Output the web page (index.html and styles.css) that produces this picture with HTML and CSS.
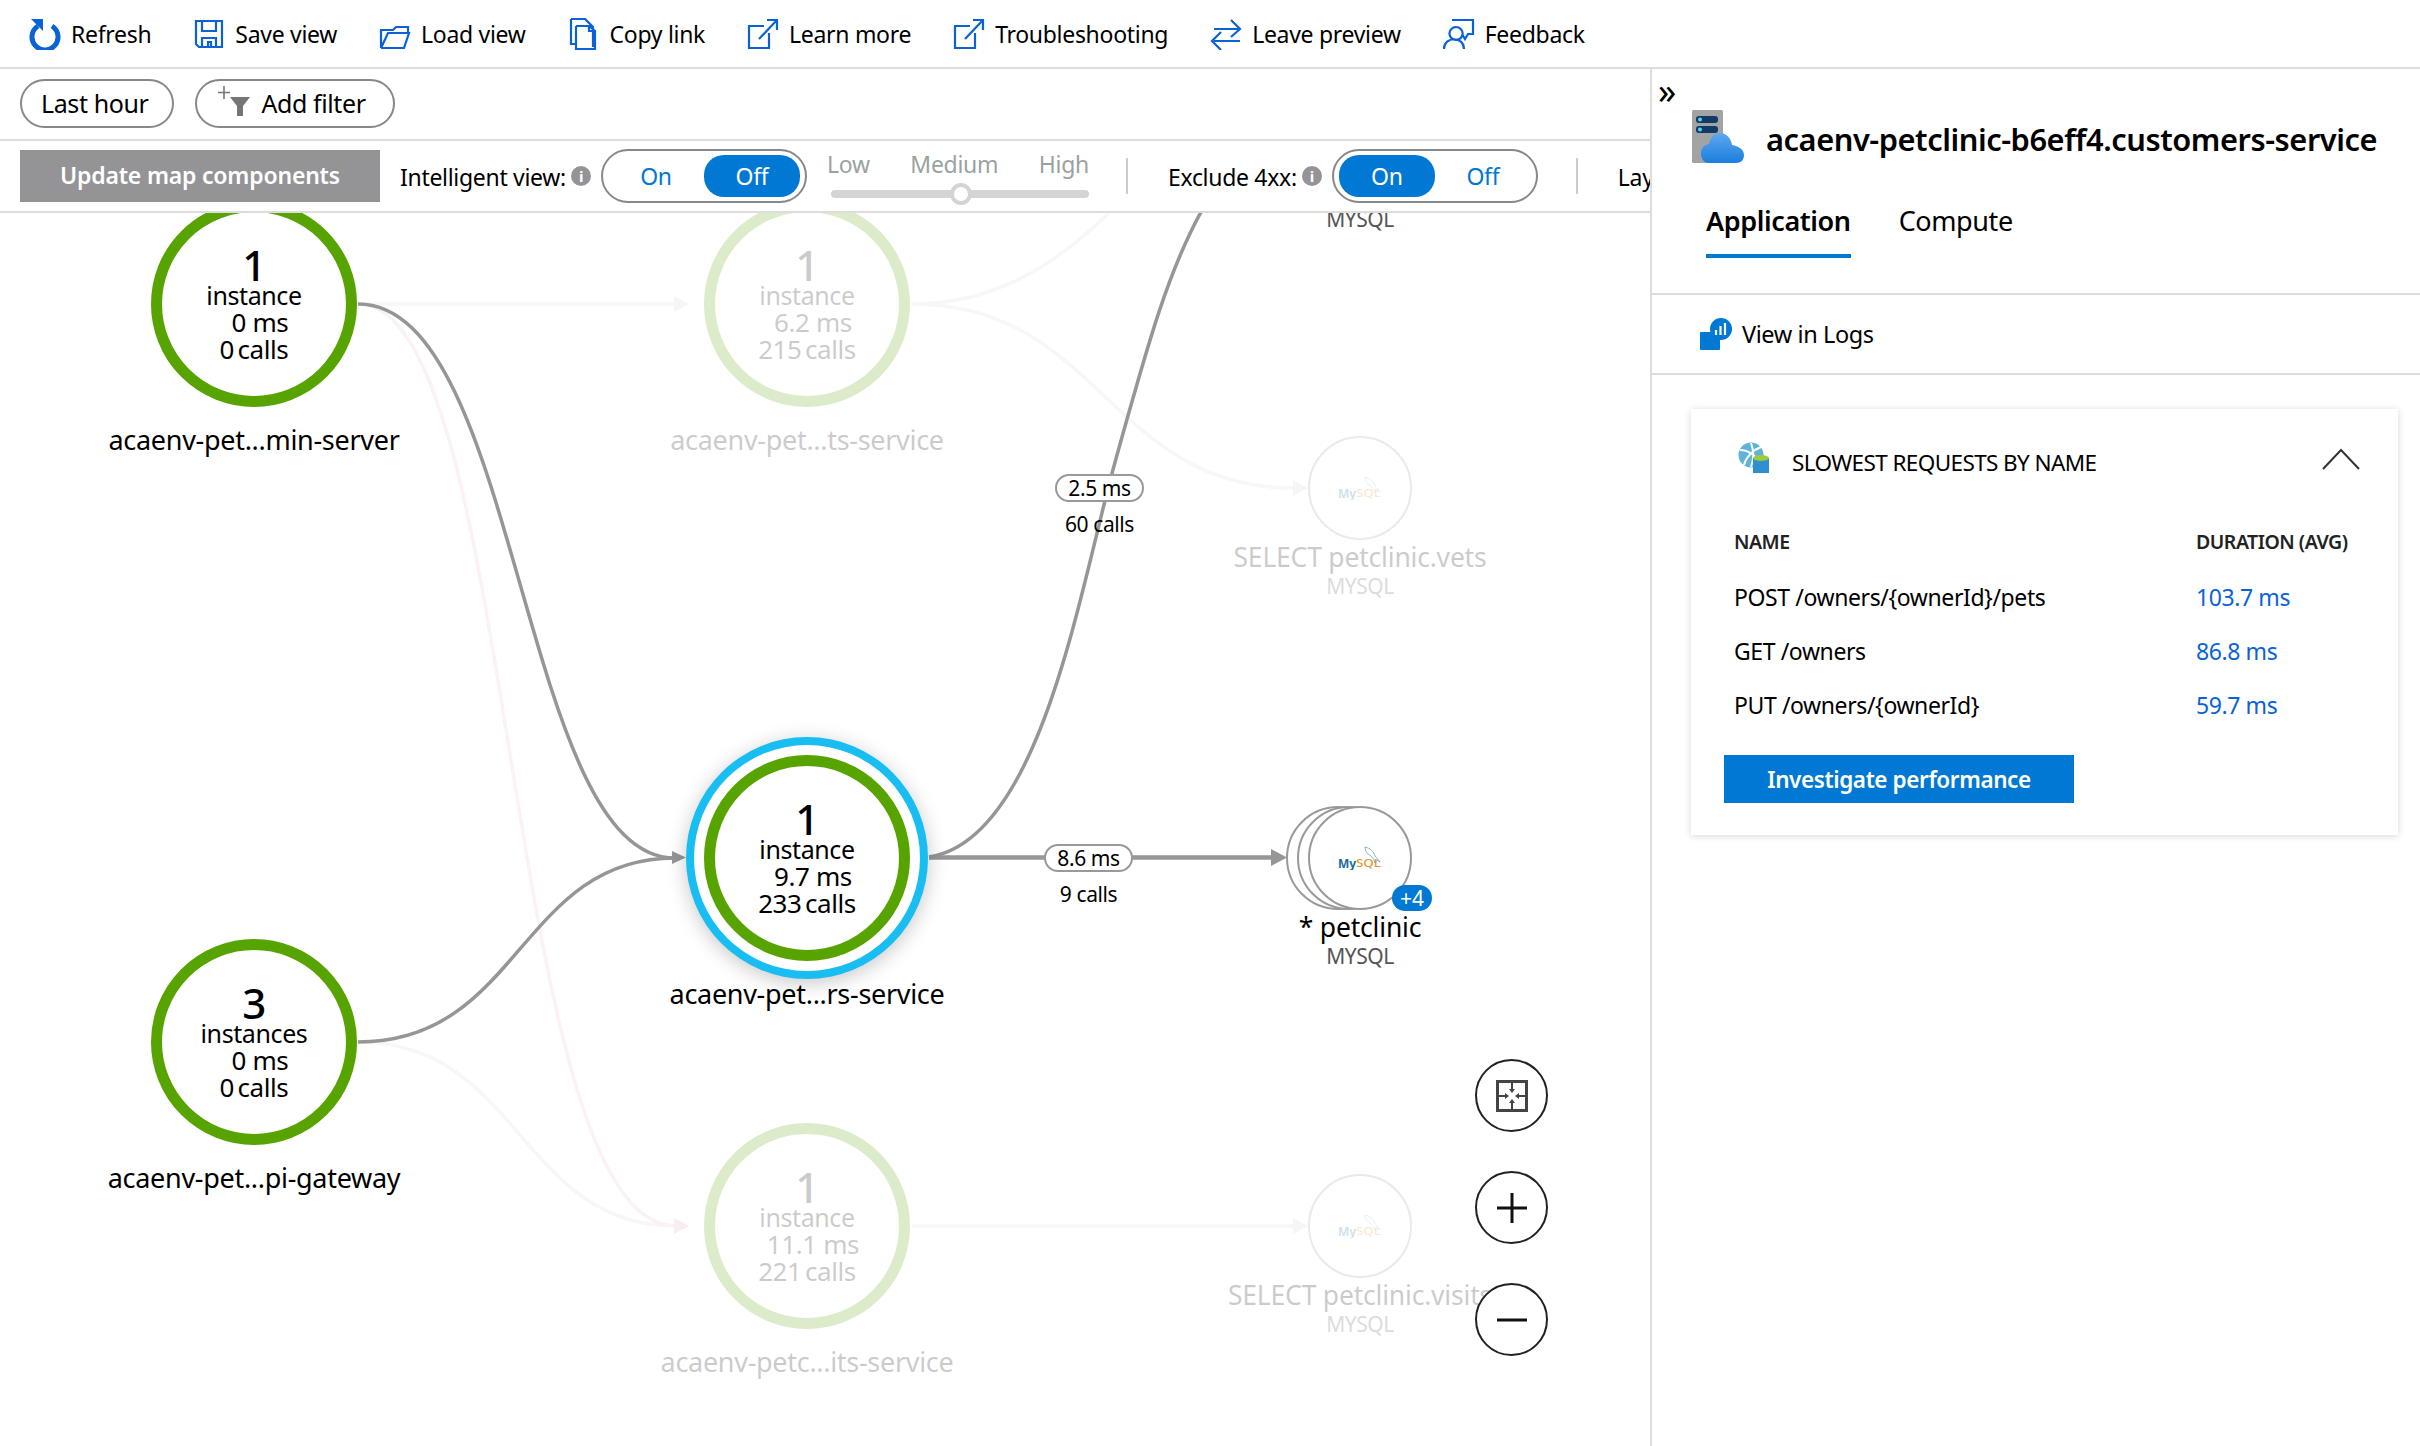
FILE: index.html
```html
<!DOCTYPE html>
<html lang="en">
<head>
  <meta charset="UTF-8">
  <title>Application Map</title>
  <link rel="stylesheet" href="styles.css">
</head>
<body>
  <div class="toolbar">
    <div class="tool">
      <svg class="tool-icon" viewBox="0 0 32 32"><path d="M9 8a13 13 0 1 0 14 0" fill="none" stroke="#0b62d6" stroke-width="5"/><path d="M2 1h12v12z" fill="#0b62d6"/></svg>
      <span>Refresh</span>
    </div>
    <div class="tool">
      <svg class="tool-icon" viewBox="0 0 32 32"><path d="M3 3h26v26H6l-3-3zM9 3v10h14V3M9 29v-9h14v9M15 29v-5h3v5" fill="none" stroke="#0b62d6" stroke-width="2.2"/></svg>
      <span>Save view</span>
    </div>
    <div class="tool">
      <svg class="tool-icon" viewBox="0 0 32 32"><path d="M2 30V12h12l3-3h12v5M2 30h23l5-15H9L2 30" fill="none" stroke="#0b62d6" stroke-width="2.2"/></svg>
      <span>Load view</span>
    </div>
    <div class="tool">
      <svg class="tool-icon" viewBox="0 0 32 32"><path d="M3 1h14l8 8v20M3 1v25h5M8 8v23h19V13l-6-5H8M21 8v5h6" fill="none" stroke="#0b62d6" stroke-width="2.2"/></svg>
      <span>Copy link</span>
    </div>
    <div class="tool">
      <svg class="tool-icon" viewBox="0 0 32 32"><path d="M17 8H2v22h20V15M12 21L30 2M20 2h10v10" fill="none" stroke="#0b62d6" stroke-width="2.2"/></svg>
      <span>Learn more</span>
    </div>
    <div class="tool">
      <svg class="tool-icon" viewBox="0 0 32 32"><path d="M17 8H2v22h20V15M12 21L30 2M20 2h10v10" fill="none" stroke="#0b62d6" stroke-width="2.2"/></svg>
      <span>Troubleshooting</span>
    </div>
    <div class="tool">
      <svg class="tool-icon" viewBox="0 0 32 32"><path d="M4 11h25M21 2l9 9-9 8M30 23H4M11 14l-9 9 9 9" fill="none" stroke="#0b62d6" stroke-width="2.2"/></svg>
      <span>Leave preview</span>
    </div>
    <div class="tool">
      <svg class="tool-icon" viewBox="0 0 32 32"><path d="M9 2h21v14h-5l-3 5-3-5M13 9a6.500 6.500 0 1 0 .1 0M1 31c0-13 20-13 20 0" fill="none" stroke="#0b62d6" stroke-width="2.2"/></svg>
      <span>Feedback</span>
    </div>
  </div>

  <div class="main">
    <div class="map-area">
      <div class="filters">
        <div class="pill">Last hour</div>
        <div class="pill pill-filter">
          <svg class="filter-icon" viewBox="0 0 32 30"><path d="M6 0v13M0 6.500h12" stroke="#777" stroke-width="1.600"/><path d="M12 11h20l-7 9v10h-6V20z" fill="#757575"/></svg>
          Add filter
        </div>
      </div>

      <div class="controls">
        <div class="update-btn">Update map components</div>
        <span class="ctl-label">Intelligent view:</span>
        <span class="info">i</span>
        <div class="toggle">
          <span class="seg">On</span>
          <span class="seg seg-on">Off</span>
        </div>
        <div class="level">
          <div class="level-names"><span>Low</span><span>Medium</span><span>High</span></div>
          <div class="level-track"><span class="level-thumb"></span></div>
        </div>
        <span class="ctl-sep"></span>
        <span class="ctl-label">Exclude 4xx:</span>
        <span class="info">i</span>
        <div class="toggle">
          <span class="seg seg-on">On</span>
          <span class="seg">Off</span>
        </div>
        <span class="ctl-sep"></span>
        <span class="ctl-label">Layout</span>
      </div>

      <div class="canvas">
        <svg class="edges" width="1650" height="1233" viewBox="0 213 1650 1233">
          <!-- faded edges first, they sit under the live ones -->
          <g class="edge-faint">
            <path d="M358 304H676"/>
            <path d="M912 304C1000 304 1060 260 1109 213"/>
            <path d="M912 304C1100 304 1110 488 1293 488"/>
            <path d="M358 1042C520 1042 520 1226 676 1226"/>
            <path d="M912 1226H1296"/>
            <polygon points="674,296 689,304 674,312"/>
            <polygon points="1293,480 1308,488 1293,496"/>
            <polygon points="1293,1218 1308,1226 1293,1234"/>
          </g>
          <g class="edge-pink">
            <path d="M358 304C520 304 500 1226 676 1226"/>
            <polygon points="674,1218 689,1226 674,1234"/>
          </g>
          <g class="edge-live">
            <path d="M358 304C520 304 520 858 675 858"/>
            <path d="M358 1042C520 1042 520 858 675 858"/>
            <path d="M929 857C1040 840 1079 593 1114 466S1170 265 1205 205"/>
            <path class="edge-thick" d="M929 857.500H1275"/>
            <polygon points="672,851 686,857.500 672,864"/>
            <polygon points="1271,849 1287,857.500 1271,866"/>
          </g>
        </svg>

        <div class="node node-admin">
          <div class="ring">
            <span class="count">1</span>
            <span>instance</span>
            <span class="ms">0 ms</span>
            <span class="calls">0 calls</span>
          </div>
          <div class="node-label">acaenv-pet...min-server</div>
        </div>
        <div class="node node-pets faded">
          <div class="ring">
            <span class="count">1</span>
            <span>instance</span>
            <span class="ms">6.2 ms</span>
            <span class="calls">215 calls</span>
          </div>
          <div class="node-label">acaenv-pet...ts-service</div>
        </div>
        <div class="node node-customers">
          <div class="ring ring-selected">
            <span class="count">1</span>
            <span>instance</span>
            <span class="ms">9.7 ms</span>
            <span class="calls">233 calls</span>
          </div>
          <div class="node-label">acaenv-pet...rs-service</div>
        </div>
        <div class="node node-gateway">
          <div class="ring">
            <span class="count">3</span>
            <span>instances</span>
            <span class="ms">0 ms</span>
            <span class="calls">0 calls</span>
          </div>
          <div class="node-label">acaenv-pet...pi-gateway</div>
        </div>
        <div class="node node-visits faded">
          <div class="ring">
            <span class="count">1</span>
            <span>instance</span>
            <span class="ms">11.1 ms</span>
            <span class="calls">221 calls</span>
          </div>
          <div class="node-label">acaenv-petc...its-service</div>
        </div>

        <div class="db db-top"><div class="db-type">MYSQL</div></div>
        <div class="db db-vets faded">
          <div class="db-circle">
            <svg class="db-logo" viewBox="0 0 44 24">
              <path class="logo-fish" d="M27 1c5 1 9 5 10 9l5 6-3-2-2 3c-1-5-4-7-7-9-2-2-3-4-3-7z"/>
              <text class="logo-my" x="0" y="22">My</text><text class="logo-sql" x="18" y="21" textLength="25" lengthAdjust="spacingAndGlyphs">SQL</text>
            </svg>
          </div>
          <div class="db-name">SELECT petclinic.vets</div>
          <div class="db-type">MYSQL</div>
        </div>
        <div class="db db-petclinic">
          <div class="db-circle db-stack">
            <span class="db-back db-back-1"></span>
            <span class="db-back db-back-2"></span>
            <svg class="db-logo" viewBox="0 0 44 24">
              <path class="logo-fish" d="M27 1c5 1 9 5 10 9l5 6-3-2-2 3c-1-5-4-7-7-9-2-2-3-4-3-7z"/>
              <text class="logo-my" x="0" y="22">My</text><text class="logo-sql" x="18" y="21" textLength="25" lengthAdjust="spacingAndGlyphs">SQL</text>
            </svg>
            <span class="db-badge">+4</span>
          </div>
          <div class="db-name">* petclinic</div>
          <div class="db-type">MYSQL</div>
        </div>
        <div class="db db-visits faded">
          <div class="db-circle">
            <svg class="db-logo" viewBox="0 0 44 24">
              <path class="logo-fish" d="M27 1c5 1 9 5 10 9l5 6-3-2-2 3c-1-5-4-7-7-9-2-2-3-4-3-7z"/>
              <text class="logo-my" x="0" y="22">My</text><text class="logo-sql" x="18" y="21" textLength="25" lengthAdjust="spacingAndGlyphs">SQL</text>
            </svg>
          </div>
          <div class="db-name">SELECT petclinic.visits</div>
          <div class="db-type">MYSQL</div>
        </div>

        <div class="edge-label edge-label-vets">
          <span class="edge-pill">2.5 ms</span>
          <span>60 calls</span>
        </div>
        <div class="edge-label edge-label-db">
          <span class="edge-pill">8.6 ms</span>
          <span>9 calls</span>
        </div>

        <div class="zoom-controls">
          <div class="zoom-btn">
            <svg viewBox="0 0 36 36" width="36" height="36"><path d="M3.500 3.500h29v29h-29z" fill="none" stroke="#444" stroke-width="3"/><path d="M18 4v9M18 32v-9M4 18h9M32 18h-9" stroke="#444" stroke-width="2"/><path d="M15 11h6l-3 4zM15 25h6l-3-4zM11 15v6l4-3zM25 15v6l-4-3z" fill="#444"/></svg>
          </div>
          <div class="zoom-btn">
            <svg viewBox="0 0 36 36" width="36" height="36"><path d="M3 18h30M18 3v30" stroke="#111" stroke-width="3"/></svg>
          </div>
          <div class="zoom-btn">
            <svg viewBox="0 0 36 36" width="36" height="36"><path d="M3 18h30" stroke="#111" stroke-width="3"/></svg>
          </div>
        </div>
      </div>
    </div>

    <div class="side-panel">
      <div class="collapse">»</div>
      <div class="panel-head">
        <svg class="panel-icon" viewBox="0 0 52 53">
          <defs><linearGradient id="cloud" x1="0" y1="0" x2="0" y2="1"><stop offset="0" stop-color="#5ea7f0"/><stop offset="1" stop-color="#1b7fdc"/></linearGradient></defs>
          <rect x="0" y="0" width="31" height="53" rx="1.500" fill="#a2a3a5"/>
          <rect x="4" y="6" width="22" height="7" rx="3" fill="#123a66"/>
          <rect x="4" y="16" width="22" height="7" rx="3" fill="#123a66"/>
          <circle cx="8" cy="9.500" r="2" fill="#4fd4f2"/>
          <circle cx="8" cy="19.500" r="2" fill="#4fd4f2"/>
          <path d="M18 53c-7 0-9-5-9-10 0-5 3-8 8-9 1-6 5-11 11-11 7 0 11 6 12 12 6 1 12 4 12 10 0 5-3 8-8 8z" fill="url(#cloud)"/>
        </svg>
        <div class="panel-title">acaenv-petclinic-b6eff4.customers-service</div>
      </div>
      <div class="tabs">
        <div class="tab tab-active">Application</div>
        <div class="tab">Compute</div>
      </div>
      <div class="logs-row">
        <svg class="logs-icon" viewBox="0 0 32 32">
          <rect x="0" y="14" width="20" height="18" rx="1" fill="#0078d4"/>
          <circle cx="21" cy="11" r="11" fill="#0078d4"/>
          <path d="M16 12v5M20.500 8v9M25 5v12" stroke="#fff" stroke-width="2.200"/>
        </svg>
        <span>View in Logs</span>
      </div>
      <div class="card">
        <div class="card-head">
          <svg class="card-icon" viewBox="0 0 32 32">
            <circle cx="13" cy="13" r="12.500" fill="#5fb4d6"/>
            <path d="M2 8c8 0 16 5 20 14M23 5C15 8 8 15 6 23M13 1c3 8 3 16 0 24" fill="none" stroke="#fff" stroke-width="2"/>
            <path d="M15 16h16v15H15z" fill="#2f8fcf"/>
            <ellipse cx="23" cy="16" rx="8" ry="3" fill="#9ccb3b"/>
          </svg>
          <span class="card-title">SLOWEST REQUESTS BY NAME</span>
          <svg class="chevron" viewBox="0 0 38 22"><path d="M1 21L19 2l18 19" fill="none" stroke="#333" stroke-width="2"/></svg>
        </div>
        <table class="requests">
          <thead>
            <tr><th>NAME</th><th>DURATION (AVG)</th></tr>
          </thead>
          <tbody>
            <tr><td>POST /owners/{ownerId}/pets</td><td class="duration">103.7 ms</td></tr>
            <tr><td>GET /owners</td><td class="duration">86.8 ms</td></tr>
            <tr><td>PUT /owners/{ownerId}</td><td class="duration">59.7 ms</td></tr>
          </tbody>
        </table>
        <div class="investigate">Investigate performance</div>
      </div>
    </div>
  </div>
</body>
</html>
```

FILE: styles.css
```css
body {
  margin: 0;
  width: 2420px;
  height: 1446px;
  overflow: hidden;
  background: #fff;
  color: #000;
  font-family: "Noto Sans", "Open Sans", sans-serif;
}

/* top toolbar */
.toolbar {
  display: flex;
  align-items: center;
  gap: 42px;
  height: 67px;
  padding-left: 29px;
  border-bottom: 2px solid #ddd;
  font-size: 23px;
  letter-spacing: -0.3px;
}
.tool {
  display: flex;
  align-items: center;
  gap: 10px;
}
.tool-icon {
  width: 32px;
  height: 32px;
}

.main {
  display: flex;
  height: 1377px;
}
.map-area {
  display: flex;
  flex-direction: column;
  flex: none;
  width: 1650px;
  overflow: hidden;
}

/* filter pills */
.filters {
  display: flex;
  align-items: center;
  gap: 21px;
  box-sizing: border-box;
  height: 72px;
  padding: 0 0 2px 20px;
  border-bottom: 2px solid #ddd;
}
.pill {
  display: flex;
  align-items: center;
  box-sizing: border-box;
  height: 49px;
  padding: 0 24px 0 19px;
  border: 2px solid #888;
  border-radius: 25px;
  font-size: 25px;
  letter-spacing: -0.4px;
}
.pill-filter {
  gap: 11px;
  padding: 0 27px 0 21px;
}
.filter-icon {
  width: 32px;
  height: 30px;
  margin-top: -4px;
}

/* controls row */
.controls {
  display: flex;
  align-items: center;
  box-sizing: border-box;
  height: 72px;
  padding-left: 20px;
  border-bottom: 2px solid #ddd;
  white-space: nowrap;
  font-size: 23px;
  letter-spacing: -0.3px;
}
.update-btn {
  flex: none;
  width: 360px;
  height: 52px;
  margin-right: 20px;
  background: #949497;
  color: #fff;
  font-size: 23px;
  font-weight: 600;
  letter-spacing: -0.2px;
  line-height: 50px;
  text-align: center;
}
.ctl-label {
  flex: none;
  padding-top: 2px;
}
.info {
  flex: none;
  width: 20px;
  height: 20px;
  margin: 0 10px 0 5px;
  border-radius: 50%;
  background: #949497;
  color: #fff;
  font-size: 15px;
  font-weight: 700;
  line-height: 20px;
  text-align: center;
}
.toggle {
  flex: none;
  display: flex;
  box-sizing: border-box;
  width: 206px;
  height: 54px;
  padding: 4px 5px;
  border: 2.5px solid #888;
  border-radius: 27px;
}
.seg {
  flex: 1;
  border-radius: 20px;
  color: #0078d4;
  line-height: 42px;
  text-align: center;
}
.seg-on {
  background: #0078d4;
  color: #fff;
}
.level {
  flex: none;
  width: 258px;
  margin: -4px 37px 0 24px;
  color: #9aa29f;
}
.level-names {
  display: flex;
  justify-content: space-between;
  margin-left: -4px;
  line-height: 28px;
}
.level-track {
  position: relative;
  height: 8px;
  margin-top: 12px;
  border-radius: 4px;
  background: #d4d4d4;
}
.level-thumb {
  position: absolute;
  left: 119px;
  top: -7px;
  box-sizing: border-box;
  width: 22px;
  height: 22px;
  border: 4px solid #d4d4d4;
  border-radius: 50%;
  background: #fff;
}
.ctl-sep {
  flex: none;
  width: 2px;
  height: 36px;
  margin-right: 40px;
  background: #ccc;
}
.controls .toggle + .ctl-sep {
  margin-left: 38px;
}

/* map canvas */
.canvas {
  position: relative;
  flex: 1;
  overflow: hidden;
}
.edges {
  position: absolute;
  left: 0;
  top: 0;
}
.edges path {
  fill: none;
}
.edge-live path {
  stroke: #969696;
  stroke-width: 3.5;
}
.edge-live .edge-thick {
  stroke-width: 4.5;
}
.edge-live polygon {
  fill: #969696;
}
.edge-faint path {
  stroke: #f7f7f7;
  stroke-width: 3.5;
}
.edge-faint polygon {
  fill: #f6f6f6;
}
.edge-pink path {
  stroke: #faf2f3;
  stroke-width: 3.5;
}
.edge-pink polygon {
  fill: #f7eef0;
}
.faded {
  opacity: 0.2;
}

/* service nodes */
.node {
  position: absolute;
  display: flex;
  flex-direction: column;
  align-items: center;
  width: 320px;
}
.node-admin { left: 94px; top: -12px; }
.node-pets { left: 647px; top: -12px; }
.node-customers { left: 647px; top: 542px; }
.node-gateway { left: 94px; top: 726px; }
.node-visits { left: 647px; top: 910px; }
.ring {
  display: flex;
  flex-direction: column;
  align-items: center;
  box-sizing: border-box;
  width: 206px;
  height: 206px;
  padding-top: 35px;
  border: 11px solid #57a300;
  border-radius: 50%;
  background: #fff;
  font-size: 25px;
  letter-spacing: -0.4px;
  line-height: 27px;
}
.ring-selected {
  box-shadow: 0 0 0 10px #fff, 0 0 0 18px #18bdf2, 0 4px 20px 18px rgba(0, 0, 0, 0.22);
}
.count {
  font-size: 42px;
  font-weight: 500;
  line-height: 35px;
}
.ms {
  padding-left: 12px;
  font-size: 26px;
}
.calls {
  font-size: 26px;
  word-spacing: -3px;
}
.node-label {
  margin-top: 16px;
  font-size: 27px;
  letter-spacing: -0.3px;
  line-height: 34px;
  white-space: nowrap;
}

/* database nodes */
.db {
  position: absolute;
  display: flex;
  flex-direction: column;
  align-items: center;
  width: 300px;
  left: 1210px;
  white-space: nowrap;
}
.db-top { top: -6px; }
.db-vets { top: 223px; }
.db-petclinic { top: 593px; z-index: 1; }
.db-visits { top: 961px; }
.db-circle {
  position: relative;
  display: flex;
  align-items: center;
  justify-content: center;
  box-sizing: border-box;
  width: 104px;
  height: 104px;
  border: 2.5px solid #999;
  border-radius: 50%;
  background: #fff;
}
.db-back {
  position: absolute;
  top: -2.5px;
  box-sizing: border-box;
  width: 104px;
  height: 104px;
  border: 2.5px solid #999;
  border-radius: 50%;
  background: #fff;
  z-index: -1;
}
.db-back-1 { left: -24.500px; }
.db-back-2 { left: -13.500px; }
.db-logo {
  width: 44px;
  height: 24px;
}
.logo-fish {
  fill: none;
  stroke: #4a93b8;
  stroke-width: 0.7;
}
.logo-my {
  font-size: 12px;
  font-weight: 700;
  fill: #1a6d97;
}
.logo-sql {
  font-size: 11px;
  font-weight: 500;
  fill: #e8963a;
}
.db-badge {
  position: absolute;
  right: -22px;
  bottom: -3px;
  width: 40px;
  height: 26px;
  border-radius: 13px;
  background: #0078d4;
  color: #fff;
  font-size: 21px;
  line-height: 26px;
  text-align: center;
}
.db-name {
  font-size: 26.5px;
  letter-spacing: -0.2px;
  line-height: 34px;
}
.db-type {
  color: #555;
  font-size: 21px;
  letter-spacing: -0.5px;
  line-height: 24px;
}

/* labels on edges */
.edge-label {
  position: absolute;
  display: flex;
  flex-direction: column;
  align-items: center;
  gap: 9px;
  font-size: 21px;
  letter-spacing: -0.4px;
  line-height: 26px;
}
.edge-label-vets { left: 1055px; top: 261px; width: 89px; }
.edge-label-db { left: 1044px; top: 631px; width: 89px; }
.edge-pill {
  box-sizing: border-box;
  width: 89px;
  height: 28px;
  border: 2px solid #999;
  border-radius: 14px;
  background: #fff;
  line-height: 24px;
  text-align: center;
}

/* zoom buttons */
.zoom-controls {
  position: absolute;
  left: 1475px;
  top: 846px;
  display: flex;
  flex-direction: column;
  gap: 39px;
}
.zoom-btn {
  display: flex;
  align-items: center;
  justify-content: center;
  box-sizing: border-box;
  width: 73px;
  height: 73px;
  border: 2.5px solid #222;
  border-radius: 50%;
  background: #fff;
}

/* right panel */
.side-panel {
  box-sizing: border-box;
  flex: none;
  width: 770px;
  border-left: 2px solid #ddd;
  overflow: hidden;
}
.collapse {
  height: 22px;
  margin: 12px 0 7px 6px;
  font-size: 36px;
  line-height: 20px;
}
.panel-head {
  display: flex;
  align-items: center;
  gap: 22px;
  padding-left: 40px;
}
.panel-icon {
  width: 52px;
  height: 53px;
}
.panel-title {
  padding-top: 4px;
  font-size: 30.8px;
  font-weight: 600;
  letter-spacing: -0.45px;
  white-space: nowrap;
}
.tabs {
  display: flex;
  gap: 48px;
  height: 132px;
  box-sizing: border-box;
  padding: 36px 0 0 54px;
  border-bottom: 2px solid #ddd;
}
.tab {
  box-sizing: border-box;
  height: 59px;
  font-size: 27px;
  letter-spacing: -0.4px;
  line-height: 44px;
}
.tab-active {
  border-bottom: 4px solid #0078d4;
  font-weight: 600;
}
.logs-row {
  display: flex;
  align-items: center;
  gap: 10px;
  box-sizing: border-box;
  height: 80px;
  padding-left: 48px;
  border-bottom: 2px solid #ddd;
  font-size: 23.5px;
  letter-spacing: -0.4px;
}
.logs-icon {
  width: 32px;
  height: 32px;
}
.card {
  box-sizing: border-box;
  width: 707px;
  margin: 34px 0 0 39px;
  padding: 33px 38px 32px 33px;
  background: #fff;
  box-shadow: 0 1px 7px rgba(0, 0, 0, 0.16);
}
.card-head {
  display: flex;
  align-items: center;
  height: 32px;
  padding-left: 14px;
}
.card-icon {
  width: 32px;
  height: 32px;
}
.card-title {
  margin: 8px 0 0 22px;
  font-size: 22.5px;
  letter-spacing: -0.6px;
}
.chevron {
  width: 38px;
  height: 22px;
  margin: 2px 0 0 auto;
}
.requests {
  margin: 41px 0 23px 10px;
  border-collapse: collapse;
  font-size: 23px;
  letter-spacing: -0.4px;
}
.requests th,
.requests td {
  height: 54px;
  padding: 0;
  text-align: left;
}
.requests th {
  height: 53px;
  padding-bottom: 2px;
  font-size: 19.5px;
  font-weight: 600;
  color: #222;
  letter-spacing: -0.5px;
}
.requests th:first-child {
  width: 462px;
}
.duration {
  color: #0a62d8;
}
.investigate {
  width: 350px;
  height: 48px;
  background: #0078d4;
  color: #fff;
  font-size: 22.5px;
  font-weight: 600;
  letter-spacing: -0.4px;
  line-height: 49px;
  text-align: center;
}
```
